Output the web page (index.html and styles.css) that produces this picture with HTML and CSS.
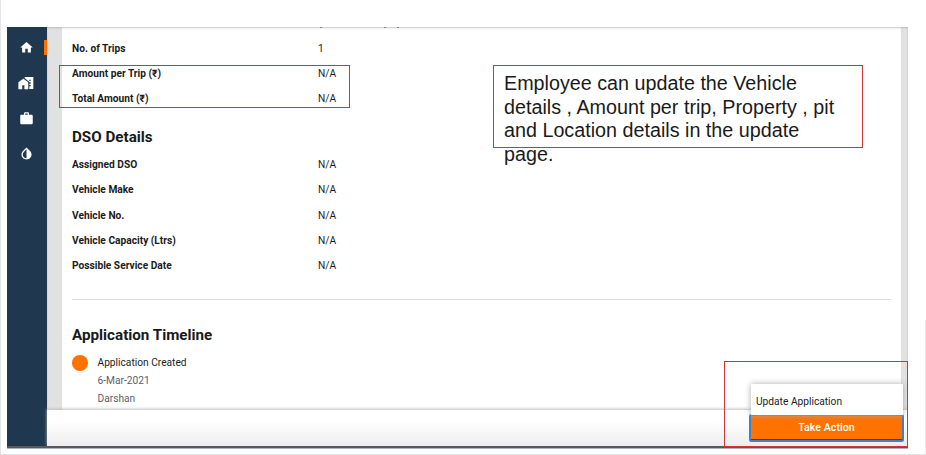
FILE: index.html
```html
<!DOCTYPE html>
<html lang="en">
<head>
<meta charset="utf-8">
<title>Application Details</title>
<link rel="stylesheet" href="styles.css">
</head>
<body>
<div class="slide">
  <div class="app">
    <nav class="sidebar">
      <a class="nav-item active"><svg viewBox="0 0 24 24"><path d="M10 20v-6h4v6h5v-8h3L12 3 2 12h3v8z"/></svg></a>
      <a class="nav-item wide"><svg viewBox="0 0 24 24"><path d="M1 11v10h5v-6h4v6h5V11L8 6z" stroke="#fff" stroke-width=".8" stroke-linejoin="round"/><path d="M10 3v1.970l7 5V11h2v2h-2v2h2v2h-2v4h6V3zm9 6h-2V7h2z"/></svg></a>
      <a class="nav-item"><svg viewBox="0 0 24 24"><path d="M20 6h-4V4c0-1.100-.9-2-2-2h-4c-1.100 0-2 .9-2 2v2H4c-1.100 0-2 .9-2 2v11c0 1.100.9 2 2 2h16c1.100 0 2-.9 2-2V8c0-1.100-.9-2-2-2zm-6 0h-4V4h4z"/></svg></a>
      <a class="nav-item"><svg viewBox="0 0 24 24"><path d="M17.660 8 12 2.350 6.340 8C4.780 9.560 4 11.640 4 13.640s.78 4.110 2.340 5.670S9.950 21.650 12 21.650s4.100-.78 5.660-2.340S20 15.640 20 13.640 19.220 9.560 17.660 8zM12 19.600c-1.600 0-3.110-.62-4.240-1.760C6.620 16.700 6 15.240 6 13.640s.62-3.070 1.760-4.240L12 5.100z"/></svg></a>
    </nav>
    <main class="content">
      <div class="card">
        <div class="scrolled-row"><i></i><i></i><i></i></div>
        <div class="row"><b>No. of Trips</b><span>1</span></div>
        <div class="row"><b>Amount per Trip (₹)</b><span>N/A</span></div>
        <div class="row"><b>Total Amount (₹)</b><span>N/A</span></div>
        <h2 class="dso">DSO Details</h2>
        <div class="row"><b>Assigned DSO</b><span>N/A</span></div>
        <div class="row"><b>Vehicle Make</b><span>N/A</span></div>
        <div class="row"><b>Vehicle No.</b><span>N/A</span></div>
        <div class="row"><b>Vehicle Capacity (Ltrs)</b><span>N/A</span></div>
        <div class="row"><b>Possible Service Date</b><span>N/A</span></div>
        <hr>
        <h2 class="timeline-title">Application Timeline</h2>
        <div class="timeline">
          <i class="dot"></i>
          <div class="event"><p class="event-name">Application Created</p><p>6-Mar-2021</p><p>Darshan</p></div>
        </div>
      </div>
      <footer class="action-bar"></footer>
    </main>
  </div>
  <div class="menu">Update Application</div>
  <button class="take-action">Take Action</button>
  <div class="mark mark-amount"></div>
  <div class="mark mark-note">Employee can update the Vehicle<br>details , Amount per trip, Property , pit<br>and Location details in the update<br>page.</div>
  <div class="mark mark-action"></div>
  <div class="edge"></div>
</div>
</body>
</html>
```
FILE: styles.css
```css
* { box-sizing: border-box; }
body { margin: 0; background: #fff; font-family: Roboto, "Noto Sans", sans-serif; }
p, h2 { margin: 0; }
.slide { position: relative; width: 926px; height: 455px; padding: 27px 18px 6px 6px; border-left: 1px solid #e4e4e4; border-bottom: 1px solid #e4e4e4; overflow: hidden; }
.app { display: flex; width: 901px; height: 421px; margin-left: -.5px; overflow: hidden; border-bottom: 2px solid #58595d; box-shadow: 0 1px 0 #a5b4c2; }
.sidebar { width: 40.500px; flex: none; background: #1f3850; padding-top: 2.500px; }
.nav-item { display: flex; height: 35.500px; align-items: center; justify-content: center; position: relative; padding-right: 1px; }
.nav-item svg { width: 15px; height: 15px; fill: #fff; }
.nav-item.wide svg { width: 16px; height: 16px; }
.active::after { content: ""; position: absolute; right: 0; top: 10px; width: 3px; height: 15px; background: #ff7200; }
.content { flex: 1; display: flex; flex-direction: column; background: #e1e1e1; box-shadow: inset 0 1px 2px #bbb; }
.card { height: 383px; margin: 0 7px 0 15px; padding: 0 10px; background: #fff; overflow: hidden; box-shadow: inset 0 2px 2px -1px #c8c8c8; }
.scrolled-row { display: grid; grid-template-columns: 64px 13px 2px; height: 8.600px; padding-left: 248px; }
.scrolled-row i { width: 2px; height: 1px; background: #888; }
.row { display: grid; grid-template-columns: 246px 1fr; height: 25.300px; line-height: 25.300px; font-size: 10.200px; color: #1c1c1c; }
.row b { font-weight: 700; white-space: nowrap; }
h2 { font-size: 15.200px; font-weight: 700; line-height: 20px; color: #1a1a1a; }
.dso { margin: 16px 0 4.500px; }
hr { margin: 21px 0 25px; border: 0; border-top: 1px solid #dfdfdf; }
.timeline { display: flex; gap: 10px; margin-top: 9px; }
.dot { width: 15.500px; height: 15.500px; border-radius: 50%; background: #ff7200; margin-top: 1px; }
.event { font-size: 10.200px; line-height: 17.700px; color: #5b6268; }
.event-name { color: #1c1c1c; }
.action-bar { position: relative; flex: 1; background: linear-gradient(#fff 30%, #ededed); box-shadow: 0 -1px 3px #bbb; }
.menu { position: absolute; left: 750px; top: 384px; width: 152px; height: 31px; padding-left: 5px; background: #fff; font-size: 10.200px; line-height: 36px; color: #222; box-shadow: 0 0 6px #aaa; z-index: 2; }
.take-action { position: absolute; left: 748px; top: 414px; width: 155px; height: 28px; padding: 0; border: 2px solid #427fc8; border-radius: 2px; background: #ff7200; box-shadow: inset 0 -1px #51402f; color: #fff; font: 500 10.700px/24px Roboto, sans-serif; }
.mark { position: absolute; border: 1px solid #cf3438; z-index: 3; }
.mark-amount { left: 58px; top: 65px; width: 291px; height: 43px; }
.mark-note { left: 492px; top: 65px; width: 370px; height: 83px; padding: 6px 0 0 10px; font: 19.740px/23.700px "Liberation Sans", sans-serif; color: #1a1a1a; white-space: nowrap; }
.mark-action { left: 723px; top: 361px; width: 184px; height: 86px; }
.edge { position: absolute; right: 0; top: 320px; bottom: 0; width: 1px; background: #ececec; }
```
